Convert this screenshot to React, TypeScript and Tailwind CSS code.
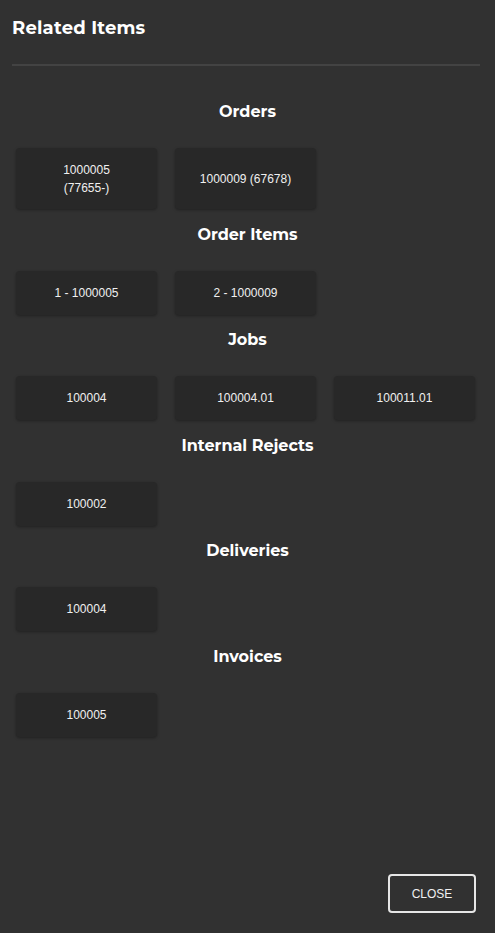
const sections: { title: string; items: string[][] }[] = [
  { title: "Orders", items: [["1000005", "(77655-)"], ["1000009 (67678)"]] },
  { title: "Order Items", items: [["1 - 1000005"], ["2 - 1000009"]] },
  { title: "Jobs", items: [["100004"], ["100004.01"], ["100011.01"]] },
  { title: "Internal Rejects", items: [["100002"]] },
  { title: "Deliveries", items: [["100004"]] },
  { title: "Invoices", items: [["100005"]] },
];

const heading = { fontFamily: "Montserrat, Inter, 'Noto Sans', sans-serif" };
const body = { fontFamily: "'Liberation Sans', Arial, sans-serif" };

export default function App() {
  return (
    <div className="w-[495px] h-[933px] bg-[#313131] text-white flex flex-col">
      <div className="px-3 pt-[17px]">
        <h1 className="text-[18px] leading-[22px] font-bold tracking-[0.2px]" style={heading}>
          Related Items
        </h1>
        <div className="mt-[25px] h-[2px] bg-[#434343] mr-[3px]" />
      </div>

      <div className="flex flex-col px-4 pt-[34px]">
        {sections.map((s, i) => (
          <div key={s.title} className={i === 0 ? "" : "mt-[13.5px]"}>
            <h2 className="text-center text-[16px] leading-6 font-bold" style={heading}>
              {s.title}
            </h2>
            <div className="mt-[24px] grid grid-cols-3 gap-x-[18px] w-[459px]">
              {s.items.map((lines, k) => (
                <div
                  key={k}
                  className={`${s.items.some((l) => l.length > 1) ? "h-[61px]" : "h-[44px]"} rounded bg-[#282828] shadow-[0_1px_3px_rgba(0,0,0,0.35)] flex flex-col items-center justify-center text-[12px] leading-[18px] text-[#f0f0f0]`}
                  style={body}
                >
                  {lines.map((t) => (
                    <span key={t}>{t}</span>
                  ))}
                </div>
              ))}
            </div>
          </div>
        ))}
      </div>

      <div className="mt-auto flex justify-end pr-[19px] pb-[20px]">
        <button
          className="w-[88px] h-[39px] rounded border-2 border-[#e6e6e6] text-[12px] text-[#f0f0f0]"
          style={body}
        >
          CLOSE
        </button>
      </div>
    </div>
  );
}
